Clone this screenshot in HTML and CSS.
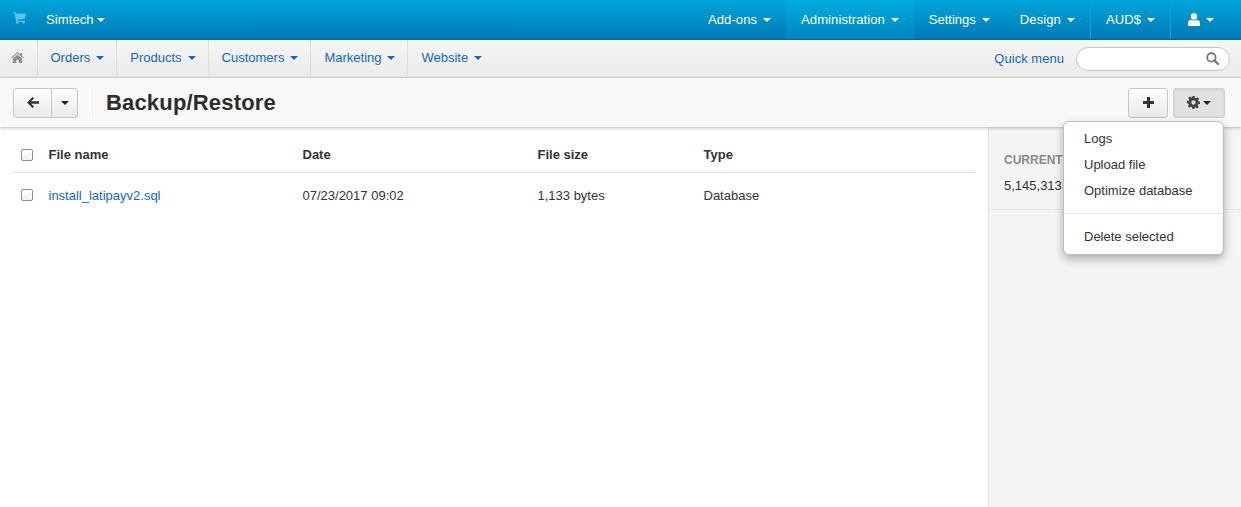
FILE: index.html
```html
<!DOCTYPE html>
<html>
<head>
<meta charset="UTF-8" />
<title>Backup/Restore</title>
<link rel="stylesheet" href="styles.css">
</head>
<body>
<div class="topbar">
	<div class="top-left">
		<svg class="cart" viewBox="0 0 14 13" width="13" height="12"><path d="M0 0h2.600l.4 1.500H14l-1.200 5.800-8.600 1 .3 1.200h8.300v1.200H3.400L1.700 1.200H0zM4.500 10.500a1.200 1.200 0 1 1 0 2.500 1.200 1.200 0 0 1 0-2.500zM11.500 10.500a1.200 1.200 0 1 1 0 2.500 1.200 1.200 0 0 1 0-2.500z"/></svg>
		<a class="brand" href="#">Simtech<span class="caret tight"></span></a>
	</div>
	<div class="top-menu">
		<a class="top-item" href="#">Add-ons<span class="caret"></span></a>
		<a class="top-item active" href="#">Administration<span class="caret"></span></a>
		<a class="top-item settings" href="#">Settings<span class="caret"></span></a>
		<a class="top-item" href="#">Design<span class="caret"></span></a>
		<a class="top-item sep" href="#">AUD$<span class="caret"></span></a>
		<a class="top-item sep user" href="#">
			<svg viewBox="0 0 12 13" width="12" height="13"><circle cx="6" cy="3.400" r="3.200"/><path d="M0 13V9.800C0 8 1.500 7 3 6.800 4 7.600 8 7.600 9 6.800 10.500 7 12 8 12 9.800V13z"/></svg>
			<span class="caret"></span>
		</a>
	</div>
</div>

<div class="subnav">
	<a class="sub-item home" href="#">
		<svg viewBox="0 0 14 12" width="13" height="11"><path d="M7 0l3 2.600V1h2v3.300L14 6l-.8.900L7 1.700.8 6.900 0 6zM2 7.200L7 3l5 4.200V12H8.300V8.500H5.700V12H2z"/></svg>
	</a>
	<a class="sub-item" href="#">Orders<span class="caret blue"></span></a>
	<a class="sub-item" href="#">Products<span class="caret blue"></span></a>
	<a class="sub-item" href="#">Customers<span class="caret blue"></span></a>
	<a class="sub-item" href="#">Marketing<span class="caret blue"></span></a>
	<a class="sub-item plain" href="#">Website<span class="caret blue"></span></a>
	<div class="sub-right">
		<a class="quick" href="#">Quick menu</a>
		<div class="search">
			<svg viewBox="0 0 14 14" width="13" height="13"><circle cx="5.800" cy="5.800" r="4.500" fill="none" stroke="#777" stroke-width="2"/><path d="M9 9l4 4" stroke="#777" stroke-width="2.400" stroke-linecap="round"/></svg>
		</div>
	</div>
</div>

<div class="toolbar">
	<div class="back-group">
		<a class="btn back" href="#">
			<svg viewBox="0 0 12 11" width="12" height="11"><path d="M5.500 0l1.500 1.500L4.200 4.300H12v2.400H4.200L7 9.500 5.500 11 0 5.500z" fill="#333"/></svg>
		</a>
		<a class="btn more" href="#"><span class="caret dark"></span></a>
	</div>
	<h1 class="title">Backup/Restore</h1>
	<div class="tool-right">
		<a class="btn plus" href="#">
			<svg viewBox="0 0 11 11" width="11" height="11"><path d="M4 0h3v4h4v3H7v4H4V7H0V4h4z" fill="#333"/></svg>
		</a>
		<a class="btn gear open" href="#">
			<svg viewBox="0 0 24 24" width="13" height="13"><path fill="#444" fill-rule="evenodd" d="M10 0h4l.7 3.300 2 .8L19.500 2.300l2.800 2.800-1.800 2.800.8 2L24 10.600v4l-3.300.7-.8 2 1.800 2.800-2.800 2.800-2.800-1.800-2 .8L14 24h-4l-.7-3.300-2-.8-2.800 1.800-2.800-2.800 1.800-2.800-.8-2L0 13.400v-4l3.300-.7.8-2L2.300 3.900 5.100 1.100l2.800 1.800 2-.8zM12 8a4 4 0 1 0 0 8 4 4 0 0 0 0-8z"/></svg>
			<span class="caret dark tight"></span>
		</a>
	</div>
</div>

<div class="menu">
	<a href="#">Logs</a>
	<a href="#">Upload file</a>
	<a href="#">Optimize database</a>
	<div class="divider"></div>
	<a href="#">Delete selected</a>
</div>

<div class="page">
	<div class="main">
		<div class="row head">
			<span class="c-check"><span class="check"></span></span>
			<span class="c-name">File name</span>
			<span class="c-date">Date</span>
			<span class="c-size">File size</span>
			<span class="c-type">Type</span>
		</div>
		<div class="row">
			<span class="c-check"><span class="check"></span></span>
			<span class="c-name"><a href="#">install_latipayv2.sql</a></span>
			<span class="c-date">07/23/2017 09:02</span>
			<span class="c-size">1,133 bytes</span>
			<span class="c-type">Database</span>
		</div>
	</div>
	<div class="side">
		<div class="side-box">
			<h4>CURRENT</h4>
			<p>5,145,313</p>
		</div>
	</div>
</div>
</body>
</html>
```

FILE: styles.css
```css
html,body{height:100%;}
body{margin:0;font-family:"Liberation Sans",Arial,sans-serif;font-size:13px;color:#333;background:#fff;overflow:hidden;display:flex;flex-direction:column;}
a{text-decoration:none;color:#0e6ac8;}

.caret{display:inline-block;width:0;height:0;border-left:4px solid transparent;border-right:4px solid transparent;border-top:4px solid #fff;margin-left:6px;vertical-align:2px;}
.caret.tight{margin-left:3px;}
.caret.blue{border-top-color:#0e6ac8;}
.caret.dark{border-top-color:#222;margin-left:0;}

.topbar{height:40px;flex:none;display:flex;justify-content:space-between;background:linear-gradient(#00a5da,#0079b6);box-sizing:border-box;border-bottom:1px solid #00689f;letter-spacing:.1px;}
.top-left{display:flex;align-items:center;padding-left:13px;}
.cart{fill:#5cc4ea;margin-right:20px;margin-top:-4px;}
.brand{color:#fff;}
.top-menu{display:flex;padding-right:13px;}
.top-item{color:#fff;display:flex;align-items:center;padding:0 15px;padding-bottom:1px;}
.top-item .caret{margin-top:2px;}
.settings{letter-spacing:0;}
.active{background:linear-gradient(#00acdf,#0085c1);}
.user{padding-left:17px;padding-right:14px;}
.user svg{fill:#fff;}
.sep{border-left:1px solid #1a9dd0;}

.subnav{height:38px;flex:none;display:flex;box-sizing:border-box;background:linear-gradient(#f6f6f6,#ebebeb);border-bottom:1px solid #d4d4d4;}
.sub-item{display:flex;align-items:center;padding:0 12px 2px 13px;border-right:1px solid #dedede;}
.sub-item.home{width:37.5px;padding:0 0 2px 11px;box-sizing:border-box;}
.sub-item.home svg{fill:#8f8f8f;}
.sub-item.plain{border-right:0;}
.sub-right{margin-left:auto;display:flex;align-items:center;padding-right:11px;}
.quick{margin-right:12px;letter-spacing:.03px;}
.search{width:154px;height:24px;box-sizing:border-box;background:#fff;border:1px solid #c4c4c4;border-radius:12px;display:flex;align-items:center;justify-content:flex-end;padding-right:10px;}

.toolbar{height:49px;flex:none;display:flex;align-items:center;box-sizing:border-box;padding:0 16px 0 13px;background:#f9f9f9;box-shadow:0 1px 3px rgba(0,0,0,.28);position:relative;}
.back-group{display:flex;padding-right:14px;border-right:1px solid #eee;height:30px;align-items:center;}
.btn{display:flex;align-items:center;justify-content:center;box-sizing:border-box;height:30px;background:linear-gradient(#fff,#e9e9e9);border:1px solid #c6c6c6;}
.back{width:39px;border-radius:4px 0 0 4px;}
.more{width:26px;border-left:0;border-radius:0 4px 4px 0;}
.title{margin:1px 0 0 13px;font-size:22px;line-height:26px;font-weight:bold;color:#2d2d2d;letter-spacing:.17px;}
.tool-right{margin-left:auto;display:flex;gap:5px;}
.plus{width:40px;border-radius:3px;}
.gear{width:52px;gap:3px;border-radius:3px;}
.gear.open{background:#e2e2e2;border-color:#d0d0d0;box-shadow:inset 0 1px 3px rgba(0,0,0,.1);}

/* dropdown lies over the side column */
.menu{position:absolute;left:1063px;top:121px;width:161px;height:134px;box-sizing:border-box;padding:4px 0;background:#fff;border:1px solid #bdbdbd;border-radius:6px;box-shadow:0 4px 10px rgba(0,0,0,.3);z-index:5;}
.menu a{display:block;height:26px;line-height:26px;padding-left:20px;color:#333;}
.divider{height:1px;background:#e5e5e5;margin:9px 0 10px;}

.page{flex:1;display:flex;min-height:0;}
.main{flex:1;padding:14px 13px 0 13px;}
.row{display:flex;align-items:center;height:44px;}
.row.head{font-weight:bold;border-bottom:1px solid #ddd;padding-bottom:4px;height:27px;}
.c-check{width:35.5px;padding-left:8px;box-sizing:border-box;display:flex;}
.check{width:12px;height:12px;box-sizing:border-box;border:1px solid #8e8e8e;border-radius:2px;background:linear-gradient(#fff,#f1f1f1);}
.c-name{width:254px;}
.c-date{width:235px;}
.c-size{width:166px;}
.side{width:253px;flex:none;box-sizing:border-box;background:#f5f5f5;border-left:1px solid #e2e2e2;}
.side-box{height:83px;box-sizing:border-box;padding:26px 15px 0;border-bottom:1px solid #e8e8e8;white-space:nowrap;overflow:hidden;}
.side-box h4{margin:0 0 11px;font-size:12px;line-height:14px;color:#8a8a8a;font-weight:bold;}
.side-box p{margin:0;line-height:16px;}
```
